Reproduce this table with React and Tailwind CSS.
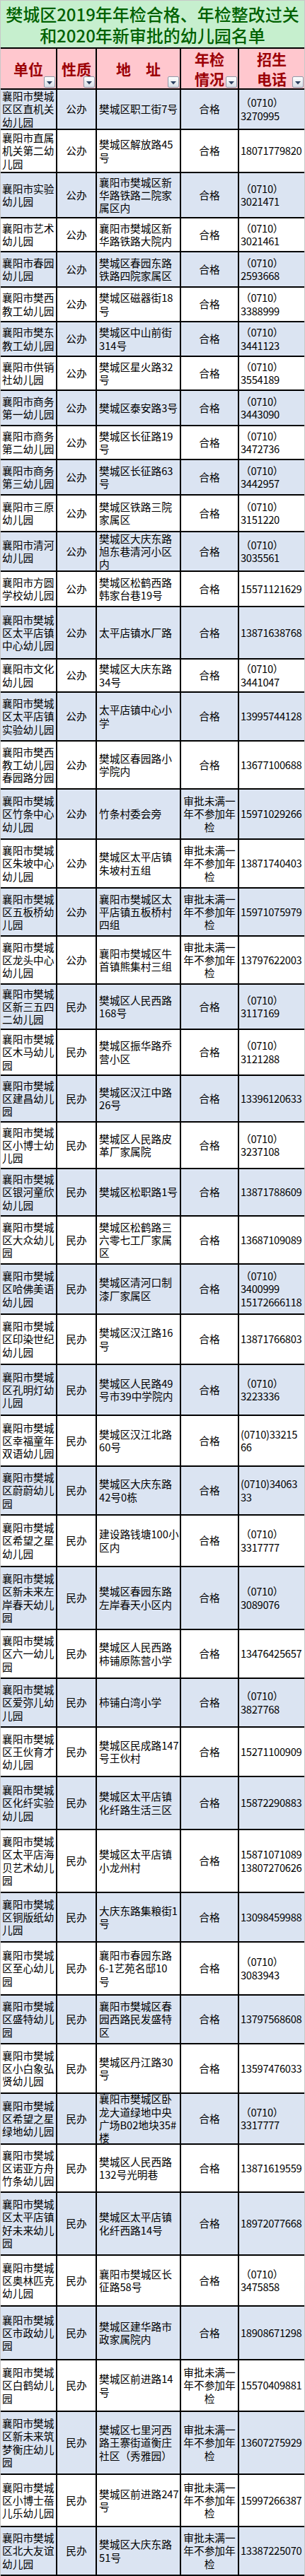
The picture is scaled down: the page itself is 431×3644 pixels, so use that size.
const SP = '审批未满一\n年不参加年\n检'

// [单位, 性质, 地址, 年检情况, 招生电话, 行高]
const rows = [
  ['襄阳市樊城区区直机关幼儿园', '公办', '樊城区职工街7号', '合格', '（0710）\n3270995', 57],
  ['襄阳市直属机关第二幼儿园', '公办', '樊城区解放路45\n号', '合格', '18071779820', 61],
  ['襄阳市实验幼儿园', '公办', '襄阳市樊城区新\n华路铁路二院家\n属区内', '合格', '（0710）\n3021471', 64],
  ['襄阳市艺术幼儿园', '公办', '襄阳市樊城区新\n华路铁路大院内', '合格', '（0710）\n3021461', 48],
  ['襄阳市春园幼儿园', '公办', '樊城区春园东路\n铁路四院家属区', '合格', '（0710）\n2593668', 50],
  ['襄阳市樊西教工幼儿园', '公办', '樊城区磁器街18\n号', '合格', '（0710）\n3388999', 49],
  ['襄阳市樊东教工幼儿园', '公办', '樊城区中山前街\n314号', '合格', '（0710）\n3441123', 49],
  ['襄阳市供销社幼儿园', '公办', '樊城区星火路32\n号', '合格', '（0710）\n3554189', 48],
  ['襄阳市商务第一幼儿园', '公办', '樊城区泰安路3号', '合格', '（0710）\n3443090', 50],
  ['襄阳市商务第二幼儿园', '公办', '樊城区长征路19\n号', '合格', '（0710）\n3472736', 48],
  ['襄阳市商务第三幼儿园', '公办', '樊城区长征路63\n号', '合格', '（0710）\n3442957', 50],
  ['襄阳市三原幼儿园', '公办', '樊城区铁路三院\n家属区', '合格', '（0710）\n3151220', 52],
  ['襄阳市清河幼儿园', '公办', '樊城区大庆东路\n旭东巷清河小区\n内', '合格', '（0710）\n3035561', 56],
  ['襄阳市方圆学校幼儿园', '公办', '樊城区松鹤西路\n韩家台巷19号', '合格', '15571121629', 50],
  ['襄阳市樊城区太平店镇中心幼儿园', '公办', '太平店镇水厂路', '合格', '13871638768', 74],
  ['襄阳市文化幼儿园', '公办', '樊城区大庆东路\n34号', '合格', '（0710）\n3441047', 47],
  ['襄阳市樊城区太平店镇实验幼儿园', '公办', '太平店镇中心小\n学', '合格', '13995744128', 69],
  ['襄阳市樊西教工幼儿园春园路分园', '公办', '樊城区春园路小\n学院内', '合格', '13677100688', 68],
  ['襄阳市樊城区竹条中心幼儿园', '公办', '竹条村委会旁', SP, '15971029266', 71],
  ['襄阳市樊城区朱坡中心幼儿园', '公办', '樊城区太平店镇\n朱坡村五组', SP, '13871740403', 69],
  ['襄阳市樊城区五板桥幼儿园', '公办', '襄阳市樊城区太\n平店镇五板桥村\n四组', SP, '15971075979', 68],
  ['襄阳市樊城区龙头中心幼儿园', '公办', '襄阳市樊城区牛\n首镇熊集村三组', SP, '13797622003', 68],
  ['襄阳市樊城区新三五四二幼儿园', '民办', '樊城区人民西路\n168号', '合格', '（0710）\n3117169', 64],
  ['襄阳市樊城区木马幼儿园', '民办', '樊城区振华路乔\n营小区', '合格', '（0710）\n3121288', 65],
  ['襄阳市樊城区建昌幼儿园', '民办', '樊城区汉江中路\n26号', '合格', '13396120633', 66],
  ['襄阳市樊城区小博士幼儿园', '民办', '樊城区人民路皮\n革厂家属院', '合格', '（0710）\n3237108', 66],
  ['襄阳市樊城区银河童欣幼儿园', '民办', '樊城区松职路1号', '合格', '13871788609', 67],
  ['襄阳市樊城区大众幼儿园', '民办', '樊城区松鹤路三\n六零七工厂家属\n区', '合格', '13687109089', 68],
  ['襄阳市樊城区哈佛美语幼儿园', '民办', '樊城区清河口制\n漆厂家属区', '合格', '（0710）\n3400999\n15172666118', 71],
  ['襄阳市樊城区印染世纪幼儿园', '民办', '樊城区汉江路16\n号', '合格', '13871766803', 71],
  ['襄阳市樊城区孔明灯幼儿园', '民办', '樊城区人民路49\n号市39中学院内', '合格', '（0710）\n3223336', 72],
  ['襄阳市樊城区幸福童年双语幼儿园', '民办', '樊城区汉江北路\n60号', '合格', '(0710)33215\n66', 72],
  ['襄阳市樊城区蔚蔚幼儿园', '民办', '樊城区大庆东路\n42号0栋', '合格', '(0710)34063\n33', 69],
  ['襄阳市樊城区希望之星幼儿园', '民办', '建设路钱塘100小\n区内', '合格', '（0710）\n3317777', 73],
  ['襄阳市樊城区新未来左岸春天幼儿园', '民办', '樊城区春园东路\n左岸春天小区内', '合格', '（0710）\n3089076', 89],
  ['襄阳市樊城区六一幼儿园', '民办', '樊城区人民西路\n柿铺原陈营小学', '合格', '13476425657', 69],
  ['襄阳市樊城区爱弥儿幼儿园', '民办', '柿铺白湾小学', '合格', '（0710）\n3827768', 69],
  ['襄阳市樊城区王伙育才幼儿园', '民办', '樊城区民成路147\n号王伙村', '合格', '15271100909', 70],
  ['襄阳市樊城区化纤实验幼儿园', '民办', '樊城区太平店镇\n化纤路生活三区', '合格', '15872290883', 75],
  ['襄阳市樊城区太平店海贝艺术幼儿园', '民办', '樊城区太平店镇\n小龙州村', '合格', '15871071089\n13807270626', 89],
  ['襄阳市樊城区铜版纸幼儿园', '民办', '大庆东路集粮街1\n号', '合格', '13098459988', 70],
  ['襄阳市樊城区至心幼儿园', '民办', '襄阳市春园东路\n6-1艺苑名邸10\n号', '合格', '（0710）\n3083943', 75],
  ['襄阳市樊城区盛特幼儿园', '民办', '襄阳市樊城区春\n园西路民发盛特\n区', '合格', '13797568608', 69],
  ['襄阳市樊城区小白象弘贤幼儿园', '民办', '樊城区丹江路30\n号', '合格', '13597476033', 70],
  ['襄阳市樊城区希望之星绿地幼儿园', '民办', '襄阳市樊城区卧\n龙大道绿地中央\n广场B02地块35#\n楼', '合格', '（0710）\n3317777', 72],
  ['襄阳市樊城区诺亚方舟竹条幼儿园', '民办', '樊城区人民西路\n132号光明巷', '合格', '13871619559', 68],
  ['襄阳市樊城区太平店镇好未来幼儿园', '民办', '樊城区太平店镇\n化纤西路14号', '合格', '18972077668', 89],
  ['襄阳市樊城区奥林匹克幼儿园', '民办', '襄阳市樊城区长\n征路58号', '合格', '（0710）\n3475858', 72],
  ['襄阳市樊城区市政幼儿园', '民办', '樊城区建华路市\n政家属院内', '合格', '18908671298', 76],
  ['襄阳市樊城区白鹤幼儿园', '民办', '樊城区前进路14\n号', SP, '15570409881', 73],
  ['襄阳市樊城区新未来筑梦衡庄幼儿园', '民办', '樊城区七里河西\n路王寨街道衡庄\n社区（秀雅园）', SP, '13607275929', 89],
  ['襄阳市樊城区小博士蓓儿乐幼儿园', '民办', '樊城区前进路247\n号', SP, '15997266387', 74],
  ['襄阳市樊城区北大友谊幼儿园', '民办', '樊城区大庆东路\n51号', SP, '13387225070', 69],
]

function chunk(name) {
  return name.match(/.{1,5}/g).join('\n')
}

function FilterButton() {
  return (
    <span className="absolute bottom-[1px] right-[1px] flex h-[16px] w-[16px] items-center justify-center rounded-[2px] border border-[#8e99a8] bg-linear-to-b from-white to-[#d9dee6]">
      <svg width="8" height="5" viewBox="0 0 8 5" className="mt-[3px]">
        <path d="M0 0h8L4 4.5z" fill="#2b3f5f" />
      </svg>
    </span>
  )
}

function HeadCell({ className, children }) {
  return (
    <div className={`relative flex shrink-0 items-center justify-center text-center ${className}`}>
      <span className="whitespace-pre leading-[28px]">{children}</span>
      <FilterButton />
    </div>
  )
}

function Row({ row, index }) {
  const [name, kind, addr, check, phone, h] = row
  const bg = index % 2 === 0 ? 'bg-[#dbe4f2]' : 'bg-white'
  return (
    <div className={`flex border-b-2 border-black ${bg}`} style={{ height: h }}>
      <div className="flex w-[80px] shrink-0 items-center whitespace-pre border-r-2 border-black pl-[2px]">
        {chunk(name)}
      </div>
      <div className="flex w-[56px] shrink-0 items-center justify-center border-r-2 border-black">{kind}</div>
      <div className="flex w-[119px] shrink-0 items-center whitespace-pre border-r-2 border-black pl-[3px]">
        {addr}
      </div>
      <div className="flex w-[82px] shrink-0 items-center justify-center whitespace-pre border-r-2 border-black text-center">
        {check}
      </div>
      <div className="flex min-w-0 flex-1 items-center whitespace-pre pl-[2px] tracking-[-0.3px]">
        {phone}
      </div>
    </div>
  )
}

export default function App() {
  return (
    <div className="w-[431px] border-x border-[#c8c8c8] bg-white font-['Noto_Sans_CJK_SC',sans-serif] text-[14.7px] leading-[18.3px] text-black">
      <div className="flex h-[69px] flex-col items-center justify-center border-t border-b-2 border-t-[#c8c8c8] border-b-black bg-[#c6efce] pt-[2px] text-[24px] font-medium leading-[30px] text-[#006100]">
        <div>樊城区2019年年检合格、年检整改过关</div>
        <div>和2020年新审批的幼儿园名单</div>
      </div>

      <div className="flex h-[58px] border-b-2 border-black bg-[#ffc7ce] text-[21px] font-bold text-[#9c0006]">
        <HeadCell className="w-[80px] border-r-2 border-black">单位</HeadCell>
        <HeadCell className="w-[56px] border-r-2 border-black">性质</HeadCell>
        <HeadCell className="w-[119px] border-r-2 border-black">地　址</HeadCell>
        <HeadCell className="w-[82px] border-r-2 border-black">{'年检\n情况'}</HeadCell>
        <HeadCell className="min-w-0 flex-1">{'招生\n电话'}</HeadCell>
      </div>

      {rows.map((row, i) => (
        <Row key={i} row={row} index={i} />
      ))}
    </div>
  )
}
